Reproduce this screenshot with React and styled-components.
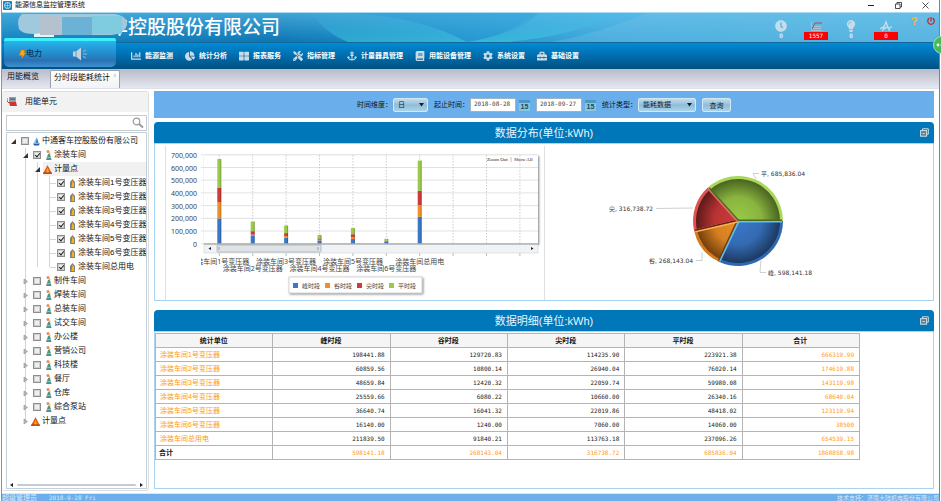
import { useState } from "react"
import styled, { createGlobalStyle, css } from "styled-components"
import { FaChartBar, FaChartPie, FaThLarge, FaTools, FaAnchor, FaBook, FaCog, FaToolbox, FaClock, FaLightbulb, FaPowerOff } from "react-icons/fa"

const sans = `"Liberation Sans", "Noto Sans CJK SC", sans-serif`
const mono = `"DejaVu Sans Mono", "Noto Sans CJK SC", monospace`
const chartFont = `"DejaVu Sans", "Noto Sans CJK SC", sans-serif`
const axisFont = `"Noto Sans", "Noto Sans CJK SC", sans-serif`

const GlobalStyle = createGlobalStyle`
  * {
    box-sizing: border-box;
  }
  body {
    margin: 0;
    background: #fff;
    font-family: ${sans};
    font-size: 8px;
    line-height: 14px;
    color: #111;
    overflow: hidden;
  }
  ul {
    margin: 0;
    padding: 0;
    list-style: none;
  }
  button, input, select {
    font-family: inherit;
    margin: 0;
  }
`

const Window = styled.div`
  display: flex;
  flex-direction: column;
  min-height: 100vh;
  margin: 0 1px;
  border-left: 1px solid #5c9fd0;
  border-right: 1px solid #4a90c8;
`

/* title bar */
const TitleBar = styled.header`
  display: flex;
  align-items: center;
  height: 12px;
  padding: 0 9px 2px 1px;
  font-size: 7px;
  line-height: 10px;
`
const AppName = styled.span`
  flex: 1;
  margin-left: 3px;
`
const WindowButton = styled.button`
  display: flex;
  width: 9px;
  height: 9px;
  margin-left: 18px;
  padding: 1px;
  border: 0;
  background: none;
`

/* banner */
const Banner = styled.div`
  position: relative;
  display: flex;
  justify-content: space-between;
  height: 31px;
  border-top: 1px solid #a9dcf2;
  border-bottom: 1px solid #14689a;
  background: linear-gradient(90deg, #1181bf 0%, #0c76b3 30%, #1a8ec6 45%, #3ba7dc 65%, #4aaede 100%);
`
const BannerArt = styled.svg`
  position: absolute;
  inset: 0;
  width: 100%;
  height: 100%;
`
const Company = styled.h1`
  position: relative;
  margin: 0;
  padding-left: 107px;
  font-size: 19px;
  line-height: 29px;
  font-weight: 500;
  color: #fff;
  white-space: nowrap;
`
const Mosaic = styled.svg`
  position: absolute;
  left: 14px;
  top: 0;
  width: 112px;
  height: 25px;
`
const BannerRight = styled.div`
  position: relative;
  display: flex;
  align-items: flex-start;
  padding-right: 3px;
`
const Alarm = styled.div`
  display: flex;
  flex-direction: column;
  align-items: center;
  width: 24px;
  margin-right: 11px;
  padding-top: 7px;
  color: #c5dde8;
  svg {
    width: 12px;
    height: 12px;
  }
`
const AlarmCount = styled.span`
  width: 24px;
  height: 8px;
  font-family: ${mono};
  font-size: 6px;
  line-height: 8px;
  text-align: center;
  color: #fff;
  background: ${({ $alert }) => ($alert ? "#f00" : "none")};
`
const IconButton = styled.button`
  display: flex;
  align-items: center;
  justify-content: center;
  width: 10px;
  height: 16px;
  padding: 0;
  border: 0;
  background: none;
  font-size: 11px;
  font-weight: bold;
  color: ${({ $color }) => $color};
`
const Divider = styled.i`
  width: 1px;
  height: 7px;
  margin: 5px 3px 0;
  background: #86b8d2;
`
const FloatBall = styled.div`
  position: absolute;
  right: -12px;
  top: 23px;
  display: flex;
  align-items: center;
  width: 18px;
  height: 18px;
  padding-left: 2px;
  border: 1px solid #9be3a4;
  border-radius: 50%;
  background: #45b95c;
  z-index: 3;
`

/* navigation */
const Nav = styled.nav`
  position: relative;
  display: flex;
  align-items: center;
  gap: 12px;
  height: 26px;
  padding-left: 129px;
  background: linear-gradient(#008bd5, #0070b2 45%, #005080);
`
const NavItem = styled.a`
  display: flex;
  align-items: center;
  gap: 4px;
  font-size: 7px;
  font-weight: bold;
  color: #fff;
  text-decoration: none;
  white-space: nowrap;
  svg {
    width: 10px;
    height: 10px;
    color: #c9dbe6;
  }
`
const Energy = styled.div`
  position: absolute;
  left: 2px;
  top: -5px;
  display: flex;
  align-items: center;
  width: 112px;
  height: 29px;
  padding-left: 15px;
  border-top: 3px solid #3df0fb;
  border-radius: 2px 2px 5px 5px;
  background: linear-gradient(#27b5ec, #2493d3 40%, #2a72b4 75%, #3c92d0);
`
const EnergyType = styled.span`
  display: flex;
  align-items: center;
  flex: 1;
  color: #06233c;
`
const Speaker = styled.svg`
  width: 16px;
  height: 14px;
  margin-right: 28px;
`

const Tabs = styled.div`
  display: flex;
  align-items: flex-end;
  height: 20px;
  background: linear-gradient(#b8bcca, #e6e8f0);
  border-bottom: 1px solid #dfe1ea;
`
const Tab = styled.button`
  display: flex;
  height: 18px;
  padding: 0 5px 2px;
  border: 0;
  background: none;
  font-size: 8px;
  line-height: 14px;
  color: #111;
  ${({ $active }) =>
    $active &&
    css`
      width: 70px;
      margin-left: 6px;
      padding: 0 3px;
      border: 1px solid #9aa0b0;
      border-bottom: 0;
      border-radius: 2px 2px 0 0;
      background: linear-gradient(#fff, #f2f3f7);
    `}
`
const CloseMark = styled.span`
  flex: 1;
  font-size: 5px;
  line-height: 8px;
  text-align: right;
  color: #aaa;
`

/* page body */
const Content = styled.div`
  display: flex;
  flex: 1;
  gap: 5px;
  padding: 2px 5px 2px 0;
`
const Sidebar = styled.aside`
  display: flex;
  flex-direction: column;
  width: 147px;
  padding-bottom: 1px;
  border: 1px solid #ddd;
  border-left: 0;
  border-radius: 3px;
`
const SideTitle = styled.div`
  display: flex;
  align-items: center;
  gap: 8px;
  height: 20px;
  padding-left: 5px;
  background: #f2f2f2;
`
const Search = styled.label`
  display: flex;
  align-items: center;
  height: 16px;
  margin: 3px 1px 1px 4px;
  padding-right: 2px;
  border: 1px solid #c4ccd2;
  input {
    flex: 1;
    min-width: 0;
    height: 12px;
    border: 0;
    outline: 0;
    font-size: 8px;
  }
`
const TreeBox = styled.div`
  display: flex;
  flex-direction: column;
  justify-content: space-between;
  flex: 1;
  margin: 0 1px 0 4px;
  border: 1px solid #c3d0da;
  overflow: hidden;
`
const Tree = styled.ul`
  padding-top: 1px;
`
const Branch = styled.ul`
  background: linear-gradient(#d4d4d4, #d4d4d4) no-repeat ${({ $depth }) => 6 + $depth * 12}px 0 / 1px calc(100% - 7px);
`
const Row = styled.div`
  display: flex;
  align-items: center;
  height: 14px;
  padding-left: ${({ $depth }) => 3 + $depth * 12}px;
  white-space: nowrap;
`
const Caret = styled.button`
  display: flex;
  flex: none;
  width: 7px;
  height: 7px;
  padding: 0;
  border: 0;
  background: none;
`
const Twig = styled.i`
  flex: none;
  width: 6px;
  height: 1px;
  margin-left: 4px;
  margin-right: -3px;
  background: #d4d4d4;
`
const NodeLabel = styled.label`
  display: flex;
  align-items: center;
  flex: 1;
  gap: 2px;
  height: 14px;
  margin-left: ${({ $point }) => ($point ? 2 : 4)}px;
  background: ${({ $selected }) => ($selected ? "#f1f1f1" : "none")};
`
const Check = styled.input`
  appearance: none;
  flex: none;
  width: 8px;
  height: 8px;
  margin-right: 2px;
  border: 1px solid #8d8d8d;
  background: #eee;
  box-shadow: inset 0 0 0 1px #cfcfcf;
  &:checked::after {
    content: "";
    display: block;
    width: 2px;
    height: 4px;
    margin-left: 2px;
    border: solid #222;
    border-width: 0 1px 1px 0;
    transform: rotate(40deg);
  }
`
const HScroll = styled.div`
  display: flex;
  align-items: center;
  justify-content: space-between;
  height: 6px;
  padding: 0 3px;
  i {
    flex: 1;
    height: 2px;
    margin: 0 3px;
    border-radius: 1px;
    background: #c3ccd4;
  }
`

const Main = styled.main`
  display: flex;
  flex-direction: column;
  flex: 1;
  min-width: 0;
  padding-bottom: 2px;
`
const Filter = styled.form`
  display: flex;
  align-items: center;
  justify-content: center;
  gap: 6px;
  height: 27px;
  margin-bottom: 4px;
  background: #6aafeb;
  font-size: 7px;
`
const Field = styled.div`
  display: flex;
  align-items: center;
  gap: 1px;
  white-space: nowrap;
`
const control = css`
  height: 14px;
  border: 1px solid #d3e8f5;
  border-radius: 2px;
  background: linear-gradient(#c5dcea, #8fbdd9 50%, #abd2e8);
  font-size: 7px;
  color: #123;
`
const SelectWrap = styled.span`
  position: relative;
  display: flex;
  svg {
    position: absolute;
    right: 4px;
    top: 5px;
    width: 5px;
    height: 4px;
  }
`
const Select = styled.select`
  ${control}
  appearance: none;
  width: ${({ $width }) => $width}px;
  padding: 0 4px;
`
const DateInput = styled.input`
  width: 46px;
  height: 14px;
  padding: 0 3px 2px;
  border: 1px solid #9fb4c2;
  background: #fff;
  font-family: ${mono};
  font-size: 6px;
  color: #444;
`
const Calendar = styled.button`
  width: 11px;
  height: 11px;
  margin: 2px 0 0 2px;
  padding: 0;
  border: 0;
  border-top: 3px solid #4f97bd;
  background: #8cc6da;
  font-size: 7px;
  font-weight: bold;
  line-height: 8px;
  color: #174b6b;
`
const Query = styled.button`
  ${control}
  width: 29px;
  padding: 0;
`

const Panel = styled.section`
  display: flex;
  flex-direction: column;
  min-height: 179px;
  & + & {
    flex: 1;
    margin-top: 9px;
  }
`
const PanelHead = styled.div`
  display: grid;
  grid-template-columns: 1fr auto 1fr;
  align-items: center;
  height: 21px;
  padding: 0 5px;
  border-radius: 4px 4px 0 0;
  background: #0077b8;
  h2 {
    grid-column: 2;
    margin: 0;
    font-size: 11px;
    line-height: 20px;
    font-weight: normal;
    color: #e9f5fc;
  }
`
const Restore = styled.button`
  justify-self: end;
  display: flex;
  width: 9px;
  height: 9px;
  padding: 0;
  border: 0;
  background: none;
`
const PanelBody = styled.div`
  flex: 1;
  padding-top: 1px;
  border: 1px solid #a8d3f3;
`
const Charts = styled(PanelBody)`
  display: grid;
  grid-template-columns: 378fr 389fr;
  padding: 2px 0 0 10px;
  svg {
    display: block;
  }
`
const ChartCell = styled.div`
  display: flex;
  justify-content: ${({ $center }) => ($center ? "center" : "flex-start")};
  border-left: 1px solid #e0e0e0;
`

const Table = styled.table`
  width: calc(100% - 73px);
  table-layout: fixed;
  border-collapse: collapse;
  font-size: 7px;
  line-height: 13px;
  th, td {
    height: 14px;
    padding: 0 5px 0 4px;
    border: 1px solid #b4b4b4;
  }
  th {
    background: #f5f5f5;
    text-align: center;
  }
  tbody th {
    background: none;
    text-align: left;
    font-weight: normal;
    color: #ff9a10;
  }
  tfoot th {
    background: none;
    padding-left: 3px;
    text-align: left;
  }
`
const Num = styled.td`
  font-family: ${mono};
  font-size: 6px;
  text-align: right;
  color: ${({ $sum }) => ($sum ? "#ff9a20" : "#222")};
`

const Footer = styled.footer`
  display: flex;
  justify-content: space-between;
  height: 8px;
  border-top: 1px solid #e4e4e4;
  background: #6aafeb;
  font-size: 7px;
  line-height: 8px;
  color: #d6e9fa;
  overflow: hidden;
  span + span {
    margin-left: 12px;
    font-family: ${mono};
    font-size: 6px;
  }
  small {
    font-size: 6px;
  }
`

const navItems = [
  ["能源监测", FaChartBar],
  ["统计分析", FaChartPie],
  ["报表服务", FaThLarge],
  ["指标管理", FaTools],
  ["计量器具管理", FaAnchor],
  ["用能设备管理", FaBook],
  ["系统设置", FaCog],
  ["基础设置", FaToolbox],
]

const tree = [
  {
    name: "中通客车控股股份有限公司",
    icon: "company",
    children: [
      {
        name: "涂装车间",
        checked: true,
        children: [
          {
            name: "计量点",
            icon: "point",
            selected: true,
            children: [1, 2, 3, 4, 5, 6]
              .map((n) => `涂装车间${n}号变压器`)
              .concat("涂装车间总用电")
              .map((name) => ({ name, icon: "meter", checked: true })),
          },
        ],
      },
      ...["制件车间", "焊装车间", "总装车间", "试交车间", "办公楼", "营销公司", "科技楼", "餐厅", "仓库", "综合泵站"].map((name) => ({ name, closed: true })),
      { name: "计量点", icon: "point", closed: true },
    ],
  },
]

// 峰, 谷, 尖, 平
const rows = [
  ["涂装车间1号变压器", "198441.88", "129720.83", "114235.90", "223921.38", "666319.99"],
  ["涂装车间2号变压器", "60859.56", "10800.14", "26940.04", "76020.14", "174619.88"],
  ["涂装车间3号变压器", "48659.84", "12420.32", "22059.74", "59980.08", "143119.98"],
  ["涂装车间4号变压器", "25559.66", "6080.22", "10660.00", "26340.16", "68640.04"],
  ["涂装车间5号变压器", "36640.74", "16041.32", "22019.86", "48418.02", "123119.94"],
  ["涂装车间6号变压器", "16140.00", "1240.00", "7060.00", "14060.00", "38500"],
  ["涂装车间总用电", "211839.50", "91840.21", "113763.18", "237096.26", "654539.15"],
]
const totals = ["598141.18", "268143.04", "316738.72", "685836.04", "1868858.98"]

const series = [
  { name: "峰时段", color: "#3a78c8", dark: "#1b365c", rim: "#2f68b0" },
  { name: "谷时段", color: "#ee9028", dark: "#6e3c0a", rim: "#d27a1c" },
  { name: "尖时段", color: "#cf3a3a", dark: "#591818", rim: "#dc5454" },
  { name: "平时段", color: "#9aca48", dark: "#465f1e", rim: "#a9d85c" },
]

function NodeIcon({ type }) {
  if (type === "point") {
    return (
      <svg width="9" height="9" viewBox="0 0 9 9">
        <path d="M4.5 0C5 2 6.5 2.5 7 5L9 8.5H0L2.2 4.5Z" fill="#e8590c" />
        <path d="M4.5 2.5L6.2 7.5H3Z" fill="#ffa51f" />
        <path d="M0 8.2h9" stroke="#7b3510" strokeWidth="1" />
      </svg>
    )
  }
  if (type === "meter") {
    return (
      <svg width="7" height="9" viewBox="0 0 7 9">
        <path d="M3.5 0L6 3V9H1V3Z" fill="#7d8084" />
        <path d="M3.5 1.5L5 4V8H2.5Z" fill="#f6b414" />
      </svg>
    )
  }
  if (type === "company") {
    return (
      <svg width="7" height="9" viewBox="0 0 7 9">
        <path d="M3.8 0L5.6 6H2.4Z" fill="#3c86cf" />
        <path d="M3 1.5V6H.8Z" fill="#8fbfe8" />
        <path d="M0 6.6H7L5.7 8.4H1.2Z" fill="#245ba5" />
      </svg>
    )
  }
  return (
    <svg width="7" height="10" viewBox="0 0 7 10">
      <path d="M3 4H5L6.5 10H1Z" fill="#4f9388" />
      <path d="M1.5 7.5H6" stroke="#9ccac2" strokeWidth=".8" />
      <circle cx="3" cy="1.6" r="1.5" fill="#ef8a50" />
      <circle cx="4.5" cy="3.2" r="1" fill="#d6b48c" />
    </svg>
  )
}

function TreeNode({ node, depth }) {
  const [open, setOpen] = useState(!node.closed)
  const [checked, setChecked] = useState(!!node.checked)
  const point = node.icon === "point"
  const leaf = node.icon === "meter"

  return (
    <li>
      <Row $depth={depth}>
        {leaf ? (
          <Twig />
        ) : (
          <Caret type="button" aria-label={node.name} onClick={() => setOpen(!open)}>
            <svg width="7" height="7" viewBox="0 0 7 7">
              {open ? <path d="M6 1V6H1Z" fill="#333" /> : <path d="M2 1L5.5 3.5L2 6Z" fill="#bbb" stroke="#888" strokeWidth=".6" />}
            </svg>
          </Caret>
        )}
        <NodeLabel $point={point} $selected={node.selected}>
          {!point && <Check type="checkbox" checked={checked} onChange={() => setChecked(!checked)} />}
          <NodeIcon type={node.icon} />
          {node.name}
        </NodeLabel>
      </Row>
      {open && node.children && (
        <Branch $depth={depth + 1}>
          {node.children.map((child) => (
            <TreeNode key={child.name} node={child} depth={depth + 1} />
          ))}
        </Branch>
      )}
    </li>
  )
}

function BarChart() {
  const step = 33.4
  const x0 = 53.3
  const base = 97.7
  const unit = 12.7 / 100000
  return (
    <svg width="378" height="152" viewBox="0 0 378 152" fontFamily={axisFont} fill="#444">
      <defs>
        <filter id="shadow" x="-10%" y="-10%" width="120%" height="130%">
          <feDropShadow dx="1" dy="1" stdDeviation="1" floodOpacity=".5" />
        </filter>
        <clipPath id="axis">
          <rect x="35" y="100" width="340" height="40" />
        </clipPath>
      </defs>
      <rect x="38" y="9" width="334" height="89" fill="#fff" filter="url(#shadow)" />
      {[0, 1, 2, 3, 4, 5, 6, 7].map((n) => (
        <g key={n}>
          <path d={`M35 ${base - n * 12.7}H372`} stroke="#e2e2e2" />
          <text x="31" y={Math.round(base - n * 12.7) + 3} fontSize="7" textAnchor="end">
            {n ? `${n}00,000` : "0"}
          </text>
        </g>
      ))}
      {Array.from({ length: 10 }, (_, i) => (
        <g key={i}>
          <path d={`M${x0 + i * step} 9V97`} stroke="#ccc" strokeDasharray="1.5 1.5" />
          <path d={`M${x0 + i * step} 107V110`} stroke="#bbb" />
        </g>
      ))}
      {rows.map((row, i) => {
        let y = base
        return series.map((s, k) => {
          const h = Number(row[k + 1]) * unit
          y -= h
          return (
            <g key={s.name + i}>
              <rect x={x0 + i * step - 2} y={y} width="4" height={h} fill={s.color} />
              <rect x={x0 + i * step + 1} y={y} width="1" height={h} fill="#000" opacity=".2" />
            </g>
          )
        })
      })}
      <rect x="38" y="98" width="334" height="9" fill="#f0f3f6" stroke="#ccd2d8" strokeWidth=".6" />
      <rect x="51" y="99" width="104" height="7" rx="1" fill="#e0e3e6" stroke="#aab0b6" strokeWidth=".8" />
      <path d="M53 101v3M152 101v3" stroke="#999" />
      <path d="M45 101v3l-2.5-1.5zM365 101v3l2.5-1.5z" fill="#222" />
      <path d="M38 98H373" stroke="#999" />
      <g clipPath="url(#axis)" fontSize="7" textAnchor="middle">
        {rows.map((row, i) => (
          <text key={row[0]} x={x0 + i * step} y={i % 2 ? 125 : 118}>
            {row[0]}
          </text>
        ))}
      </g>
      <g fontFamily="Liberation Serif, serif" fontSize="5" fill="#222">
        <text x="321" y="15">Zoom Out</text>
        <path d="M345 11v5" stroke="#999" strokeWidth=".6" />
        <text x="348" y="15">Show All</text>
      </g>
      <rect x="123" y="131" width="133" height="16" fill="#fff" stroke="#bbb" strokeWidth=".6" filter="url(#shadow)" />
      {series.map((s, i) => (
        <g key={s.name}>
          <rect x={127 + i * 32} y="137" width="5" height="5" fill={s.color} />
          <text x={136 + i * 32} y="142" fontSize="6">
            {s.name}
          </text>
        </g>
      ))}
    </svg>
  )
}

const labels = [
  { text: "峰, 598,141.18", x: 179, y: 129, line: "M172 113L171 126.5H177" },
  { text: "谷, 268,143.04", x: 60, y: 117, line: "M107 114.5H113V106" },
  { text: "尖, 316,738.72", x: 20, y: 65, line: "M67 62.5L104 62" },
  { text: "平, 685,836.04", x: 172, y: 30, line: "M167 33L164 27.5H170" },
]

function PieChart() {
  const cx = 149
  const cy = 75
  const sum = Number(totals[4])
  const point = (a, r) => `${cx + Math.cos(a) * r} ${cy + Math.sin(a) * r}`
  let angle = 0
  const slices = series.map((s, i) => {
    const start = angle
    angle += (Number(totals[i]) / sum) * Math.PI * 2
    return { ...s, start, end: angle }
  })
  const sector = (s, r) => `M${cx} ${cy}L${point(s.start, r)}A${r} ${r} 0 0 1 ${point(s.end, r)}Z`
  // line along a slice edge, pushed to one side of it
  const edge = (a, side) => {
    const dx = -Math.sin(a) * side
    const dy = Math.cos(a) * side
    return `M${cx + dx} ${cy + dy}l${Math.cos(a) * 44} ${Math.sin(a) * 44}`
  }
  return (
    <svg width="300" height="152" viewBox="0 0 300 152" fontFamily={chartFont} fontSize="6" fill="#333">
      <defs>
        {slices.map((s, i) => (
          <radialGradient key={s.name} id={`slice${i}`} gradientUnits="userSpaceOnUse" cx={cx} cy={cy} r="43">
            <stop offset="0" stopColor={s.color} />
            <stop offset=".55" stopColor={s.color} stopOpacity=".8" />
            <stop offset="1" stopColor={s.color} stopOpacity="0" />
          </radialGradient>
        ))}
      </defs>
      {slices.map((s, i) => (
        <g key={s.name}>
          <path d={sector(s, 45)} fill={s.rim} />
          <path d={sector(s, 42)} fill={s.dark} />
          <path d={sector(s, 42)} fill={`url(#slice${i})`} />
        </g>
      ))}
      <g strokeWidth="1.4">
        <path d={edge(0, -0.8)} stroke="#4d6a1e" />
        <path d={edge(0, 0.8)} stroke="#5fc4fa" />
        <path d={edge(slices[1].start, 0.8)} stroke="#6b3f0c" />
        <path d={edge(slices[1].start, -0.8)} stroke="#5fc4fa" />
        <path d={edge(slices[2].start, 0.8)} stroke="#f8b850" />
        <path d={edge(slices[2].start, -0.8)} stroke="#f8b850" />
        <path d={edge(slices[2].start, 0.8)} stroke="#6e1c1c" />
        <path d={edge(slices[3].start, 0.8)} stroke="#4d6a1e" />
        <path d={edge(slices[3].start, -0.8)} stroke="#ee6a6a" />
      </g>
      {labels.map((l) => (
        <g key={l.text}>
          <path d={l.line} fill="none" stroke="#bbb" strokeWidth=".7" />
          <text x={l.x} y={l.y}>
            {l.text}
          </text>
        </g>
      ))}
    </svg>
  )
}

function PanelTitle({ children }) {
  return (
    <PanelHead>
      <h2>{children}</h2>
      <Restore type="button" aria-label="还原">
        <svg width="9" height="9" viewBox="0 0 9 9" fill="none" stroke="#d5dde2">
          <path d="M2.5 2.5V.8H8.3V6.2H6.8" />
          <rect x=".6" y="2.6" width="6" height="5.6" fill="#5b7f96" />
          <path d="M2.5 5.5h2.3" />
        </svg>
      </Restore>
    </PanelHead>
  )
}

function Arrow() {
  return (
    <svg viewBox="0 0 5 4">
      <path d="M0 0H5L2.5 3.5Z" fill="#123" />
    </svg>
  )
}

function App() {
  return (
    <Window>
      <GlobalStyle />
      <TitleBar>
        <svg width="9" height="9" viewBox="0 0 9 9">
          <rect width="9" height="9" rx="1" fill="#1b83bd" />
          <circle cx="4.5" cy="4.5" r="3" fill="none" stroke="#bfe6f7" />
          <path d="M2 4.5h5M4.5 2v5" stroke="#bfe6f7" strokeWidth=".6" />
        </svg>
        <AppName>能源信息监控管理系统</AppName>
        <WindowButton type="button" aria-label="最小化">
          <svg viewBox="0 0 7 7" stroke="#222"><path d="M0 3.5H6" /></svg>
        </WindowButton>
        <WindowButton type="button" aria-label="还原">
          <svg viewBox="0 0 7 7" stroke="#222" fill="none" strokeWidth=".8"><path d="M2 2V.5H6.5V5H5M.5 2H5V6.5H.5Z" /></svg>
        </WindowButton>
        <WindowButton type="button" aria-label="关闭">
          <svg viewBox="0 0 7 7" stroke="#222" strokeWidth=".8"><path d="M.5 .5L6.5 6.5M6.5 .5L.5 6.5" /></svg>
        </WindowButton>
      </TitleBar>

      <Banner>
        <BannerArt viewBox="0 0 937 30" preserveAspectRatio="none">
          <defs>
            <linearGradient id="glow" x2="0" y2="1">
              <stop offset="0" stopColor="#3fb8e6" stopOpacity=".1" />
              <stop offset="1" stopColor="#48d4e4" stopOpacity=".5" />
            </linearGradient>
            <linearGradient id="top" x2="0" y2="1">
              <stop offset="0" stopColor="#6cc8f0" stopOpacity=".55" />
              <stop offset="1" stopColor="#6cc8f0" stopOpacity="0" />
            </linearGradient>
          </defs>
          <rect width="937" height="30" fill="url(#top)" />
          <path d="M310 0Q322 20 346 30H465Q420 4 345 0Z" fill="url(#glow)" />
          <path d="M345 0Q420 4 465 30H485Q520 18 536 0Z" fill="#2a9bd6" opacity=".4" />
          <path d="M465 30Q515 22 530 0H620Q570 24 505 30Z" fill="url(#glow)" />
          <path d="M550 30Q600 20 645 0H937V30Z" fill="#7cc4e4" opacity=".3" />
        </BannerArt>
        <Company>车控股股份有限公司</Company>
        <Mosaic viewBox="0 0 112 25">
          <path d="M18 14H38V24H18Z" fill="#e9f3f8" />
          <path d="M6 1H98Q112 3 111 12Q109 20 96 22H38L26 20Q8 23 3 16Q0 6 6 1Z" fill="#a0c9de" />
          <path d="M24 2H46V22H24Z" fill="#b5c2cd" />
          <path d="M46 4H76V22H46Z" fill="#6bb2d6" />
          <path d="M76 3H106V21H76Z" fill="#7fcbe0" />
        </Mosaic>
        <BannerRight>
          <Alarm>
            <FaClock />
            <AlarmCount>0</AlarmCount>
          </Alarm>
          <Alarm>
            <svg viewBox="0 0 12 12" fill="none" stroke="#a9c6d6">
              <path d="M1.5 2V10.5H12M3 8.5H11M4 6.5H11" strokeWidth=".9" />
              <path d="M2 9L5 3H12" stroke="#b04a68" />
            </svg>
            <AlarmCount $alert>1557</AlarmCount>
          </Alarm>
          <Alarm>
            <FaLightbulb />
            <AlarmCount>0</AlarmCount>
          </Alarm>
          <Alarm>
            <svg viewBox="0 0 12 12" fill="none" stroke="#c5dde8" strokeWidth="1.4">
              <path d="M2.5 11L6 2L9.5 11M0 9L3 7L5 8.5L7 7L9 8.5L12 6.5" />
            </svg>
            <AlarmCount $alert>0</AlarmCount>
          </Alarm>
          <IconButton type="button" aria-label="帮助" $color="#ffb52b">?</IconButton>
          <Divider />
          <IconButton type="button" aria-label="退出" $color="#c62828">
            <FaPowerOff size={8} />
          </IconButton>
        </BannerRight>
        <FloatBall>
          <svg width="8" height="4" viewBox="0 0 8 4" fill="#fff">
            <circle cx="2" cy="2" r="1.4" />
            <circle cx="6" cy="2" r="1.4" />
          </svg>
        </FloatBall>
      </Banner>

      <Nav>
        <Energy>
          <EnergyType>
            <svg width="7" height="9" viewBox="0 0 7 9">
              <path d="M2 0H6L5 2.5H7L2.5 9L3 5.5H0Z" fill="#ffa41c" stroke="#b4690a" strokeWidth=".4" />
            </svg>
            电力
          </EnergyType>
          <Speaker viewBox="0 0 16 14">
            <path d="M1 4.5H4L9 .5V13.5L4 9.5H1Z" fill="#c3d3df" />
            <path d="M4 4.5V9.5" stroke="#6f9cc0" />
            <path d="M11 4.5L14 3M11 7H15M11 9.5L14 11" stroke="#8dbbdc" />
          </Speaker>
        </Energy>
        {navItems.map(([name, Icon]) => (
          <NavItem href="#" key={name}>
            <Icon />
            {name}
          </NavItem>
        ))}
      </Nav>

      <Tabs>
        <Tab type="button">用能概览</Tab>
        <Tab type="button" $active>
          分时段能耗统计
          <CloseMark>x</CloseMark>
        </Tab>
      </Tabs>

      <Content>
        <Sidebar>
          <SideTitle>
            <svg width="10" height="10" viewBox="0 0 10 10">
              <path d="M2 0H9V5H2Z" fill="#8ea3a6" />
              <path d="M3 1.2H8V3H3Z" fill="#4f7d80" />
              <path d="M2 5H9L10 9H3Z" fill="#cf3434" />
              <path d="M0 1V4L2 6" fill="none" stroke="#c33" />
            </svg>
            用能单元
          </SideTitle>
          <Search>
            <input type="text" aria-label="搜索" />
            <svg width="12" height="12" viewBox="0 0 12 12" fill="none" stroke="#9a9a9a">
              <circle cx="4.5" cy="4.5" r="3.3" strokeWidth="1.2" />
              <path d="M7 7L11 10.5" strokeWidth="2" />
            </svg>
          </Search>
          <TreeBox>
            <Tree>
              {tree.map((node) => (
                <TreeNode key={node.name} node={node} depth={0} />
              ))}
            </Tree>
            <HScroll>
              <svg width="4" height="4" viewBox="0 0 4 4"><path d="M3 0V4L0 2Z" fill="#222" /></svg>
              <i />
              <svg width="4" height="4" viewBox="0 0 4 4"><path d="M1 0V4L4 2Z" fill="#222" /></svg>
            </HScroll>
          </TreeBox>
        </Sidebar>

        <Main>
          <Filter onSubmit={(e) => e.preventDefault()}>
            <Field>
              <label htmlFor="dimension">时间维度：</label>
              <SelectWrap>
                <Select id="dimension" $width={35}>
                  <option>日</option>
                </Select>
                <Arrow />
              </SelectWrap>
            </Field>
            <Field>
              <label htmlFor="begin">起止时间：</label>
              <DateInput id="begin" type="text" defaultValue="2018-08-28" />
              <Calendar type="button">15</Calendar>
            </Field>
            <Field>
              <DateInput type="text" aria-label="结束时间" defaultValue="2018-09-27" />
              <Calendar type="button">15</Calendar>
            </Field>
            <Field>
              <label htmlFor="kind">统计类型：</label>
              <SelectWrap>
                <Select id="kind" $width={58}>
                  <option>能耗数据</option>
                </Select>
                <Arrow />
              </SelectWrap>
            </Field>
            <Query type="submit">查询</Query>
          </Filter>

          <Panel>
            <PanelTitle>数据分布(单位:kWh)</PanelTitle>
            <Charts>
              <ChartCell>
                <BarChart />
              </ChartCell>
              <ChartCell $center>
                <PieChart />
              </ChartCell>
            </Charts>
          </Panel>

          <Panel>
            <PanelTitle>数据明细(单位:kWh)</PanelTitle>
            <PanelBody>
              <Table>
                <thead>
                  <tr>
                    {["统计单位", "峰时段", "谷时段", "尖时段", "平时段", "合计"].map((h) => (
                      <th key={h} scope="col">{h}</th>
                    ))}
                  </tr>
                </thead>
                <tbody>
                  {rows.map(([name, ...values]) => (
                    <tr key={name}>
                      <th scope="row">{name}</th>
                      {values.map((v, i) => (
                        <Num key={i} $sum={i === 4}>{v}</Num>
                      ))}
                    </tr>
                  ))}
                </tbody>
                <tfoot>
                  <tr>
                    <th scope="row">合计</th>
                    {totals.map((v) => (
                      <Num key={v} $sum>{v}</Num>
                    ))}
                  </tr>
                </tfoot>
              </Table>
            </PanelBody>
          </Panel>
        </Main>
      </Content>

      <Footer>
        <div>
          <span>超级管理员</span>
          <span>2018-9-28 Fri</span>
        </div>
        <small>技术支持：济南大陆机电股份有限公司</small>
      </Footer>
    </Window>
  )
}

export default App
